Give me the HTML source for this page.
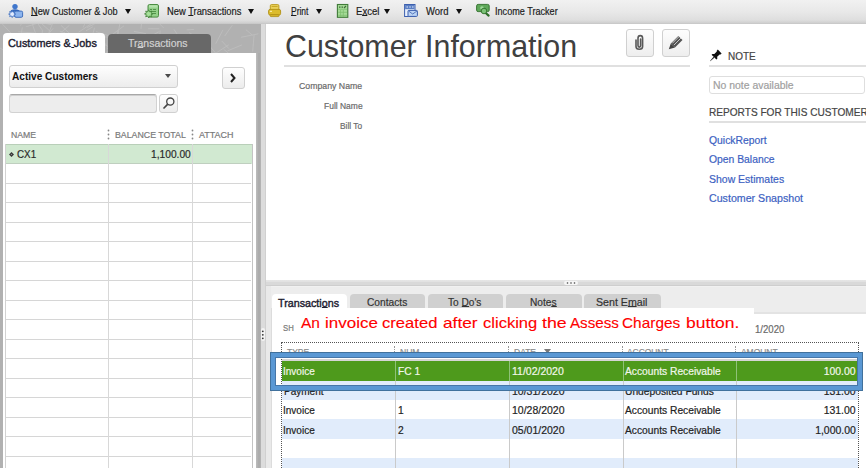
<!DOCTYPE html>
<html><head><meta charset="utf-8">
<style>
*{margin:0;padding:0;box-sizing:border-box}
html,body{width:866px;height:468px;overflow:hidden;background:#fff}
body{position:relative;font-family:"Liberation Sans",sans-serif;font-size:11px;color:#222}
.a{position:absolute}
.t{position:absolute;white-space:nowrap;line-height:1}
u{text-decoration:none;background:linear-gradient(currentColor,currentColor) no-repeat 0 calc(100% - 1px)/100% 1px}
.arr{position:absolute;width:0;height:0;border-left:3px solid transparent;border-right:3px solid transparent;border-top:5px solid #111}
.btn{position:absolute;border:1px solid #d0d0d0;border-radius:3px;background:linear-gradient(#fefefe,#ececec)}
.ll{position:absolute;left:6px;width:245px;height:1px;background:#d6d6d6}
.tabg{position:absolute;top:294px;height:20px;background:#d0d0d0;border-radius:4px 4px 0 0}
</style></head><body>

<!-- toolbar -->
<div class="a" style="left:0;top:0;width:866px;height:24px;background:linear-gradient(#f1f1f1 0px,#e8e8e8 12px,#dedede 20px,#cfcfcf 23px,#c4c4c4 24px)"></div>
<svg class="a" style="left:0;top:0" width="30" height="22" viewBox="0 0 30 22">
  <circle cx="15" cy="6.6" r="2.7" fill="#3f76cc"/>
  <path d="M10 12.5Q10.3 9.2 15 9.2Q19.7 9.2 20 12Z" fill="#3468bd"/>
  <rect x="14.6" y="11.1" width="8" height="6.2" rx="1.3" fill="#8db5ee" stroke="#3566b8" stroke-width="0.9"/>
  <path d="M12.2 10.6L13 12.3L14.8 11.6L14.2 13.4L15.8 14.1L14.2 14.8L14.8 16.6L13 15.9L12.2 17.6L11.4 15.9L9.6 16.6L10.2 14.8L8.6 14.1L10.2 13.4L9.6 11.6L11.4 12.3Z" fill="#e2ecff" stroke="#3d6fc0" stroke-width="0.8"/>
</svg>
<div class="arr" style="left:124.5px;top:8.5px;border-left-width:3.2px;border-right-width:3.2px"></div>
<svg class="a" style="left:140px;top:0" width="24" height="22" viewBox="0 0 24 22">
  <rect x="8" y="4.5" width="10.5" height="12.6" rx="1.5" fill="#93d089" stroke="#4b8c42" stroke-width="1"/>
  <rect x="9" y="5.2" width="8.5" height="2.4" fill="#b4e2ab"/>
  <path d="M10 9.5H12M13 9.5H16M10 11.5H16M11 13.5H16" stroke="#4b8c42" stroke-width="0.9"/>
  <path d="M8.7 9.8L9.6 11.8L11.7 11L11 13.1L12.9 13.9L11 14.7L11.7 16.8L9.6 16L8.7 18L7.8 16L5.7 16.8L6.4 14.7L4.5 13.9L6.4 13.1L5.7 11L7.8 11.8Z" fill="#a6e09a" stroke="#3f7f36" stroke-width="0.8"/>
</svg>
<div class="arr" style="left:248px;top:8.5px"></div>
<svg class="a" style="left:264px;top:0" width="24" height="22" viewBox="0 0 24 22">
  <rect x="6.3" y="4.6" width="8.6" height="6" rx="1.2" fill="#e9d15a" stroke="#b8961a" stroke-width="0.9"/>
  <rect x="7.6" y="6" width="6" height="1" fill="#c9a826"/>
  <rect x="4.6" y="9.4" width="12" height="5.6" rx="1.5" fill="#dcbc2c" stroke="#b08e12" stroke-width="0.9"/>
  <rect x="5.8" y="10.8" width="2.2" height="1" fill="#fff6c0"/>
  <rect x="6.2" y="14.6" width="8.8" height="2" rx="0.8" fill="#d6b52a" stroke="#b08e12" stroke-width="0.8"/>
</svg>
<div class="arr" style="left:316px;top:8.5px"></div>
<svg class="a" style="left:332px;top:0" width="24" height="22" viewBox="0 0 24 22">
  <rect x="5.4" y="4.5" width="10.4" height="12.8" fill="#a6dc98" stroke="#3f7a38" stroke-width="1.1"/>
  <path d="M7 7.2H8.5M9.5 7.2H11M12 8L14 6" stroke="#3f6a38" stroke-width="1.2"/>
  <path d="M6.2 9.3H15M6.2 12.3H15M6.2 15.3H15M8.6 10V17M11.3 10V17" stroke="#7fbf70" stroke-width="0.8"/>
</svg>
<div class="arr" style="left:383.5px;top:8.5px"></div>
<svg class="a" style="left:400px;top:0" width="24" height="22" viewBox="0 0 24 22">
  <rect x="4.6" y="4.5" width="10.4" height="12" fill="#e8f0fc" stroke="#3c5fae" stroke-width="1"/>
  <rect x="5.1" y="5" width="9.4" height="4.2" fill="#5b7fc4"/>
  <path d="M6.5 7H8M9.3 7H10.8M12 7H13.5" stroke="#e6eefc" stroke-width="1.2"/>
  <rect x="8" y="10.4" width="9.4" height="6" rx="0.8" fill="#bcd4f4" stroke="#3c5fae" stroke-width="1"/>
  <path d="M8.5 11L12.7 14L17 11" stroke="#3c5fae" stroke-width="0.8" fill="none"/>
</svg>
<div class="arr" style="left:456px;top:8.5px"></div>
<svg class="a" style="left:472px;top:0" width="24" height="22" viewBox="0 0 24 22">
  <rect x="4.6" y="4.4" width="12.6" height="7.2" rx="1.5" fill="#5fa85a" stroke="#2f6e2a" stroke-width="0.9"/>
  <circle cx="10" cy="8" r="1.8" fill="#9fd89a"/>
  <path d="M14 13.2L16.6 15.6" stroke="#2f6e2a" stroke-width="2.2" stroke-linecap="round"/>
  <circle cx="12" cy="11" r="2.8" fill="#7cc277" stroke="#2f6e2a" stroke-width="0.9"/>
</svg>

<!-- left panel bg -->
<div class="a" style="left:0;top:24px;width:261px;height:444px;background:#b1b1b1"></div>
<svg class="a" style="left:0;top:24px" width="261" height="30" viewBox="0 0 261 30"><path d="M86.1 -2.5L83.0 3.6M133.9 7.4L145.8 9.6M6.3 10.3L13.2 11.8M106.8 23.9L114.8 27.2M165.1 24.8L162.5 35.3M259.1 -5.3L250.5 -1.2M33.2 -7.2L42.1 5.9M49.4 11.8L45.0 21.3M138.8 -3.5L147.1 -1.9M174.0 5.4L181.2 16.3M124.0 1.8L112.5 10.4M64.4 8.0L63.1 24.5M194.1 5.4L186.7 5.9M103.9 20.3L114.4 25.7M15.0 15.4L5.5 24.1M232.3 1.2L224.7 12.0M158.9 7.7L143.8 16.1M116.7 18.2L130.8 20.9M172.9 29.2L164.9 34.2M94.9 19.3L106.4 20.1M36.4 -2.1L51.3 0.7M31.0 -3.6L36.5 11.9M22.3 3.4L19.7 19.8M210.3 22.8L217.4 31.2M97.5 27.2L89.8 28.2M41.6 -0.4L50.4 7.5M148.2 4.7L159.3 4.8M103.4 14.9L89.3 17.0M136.3 15.0L132.8 20.7M242.0 20.9L227.6 26.8M96.0 7.6L108.9 11.9M13.1 -4.9L19.4 -0.1M84.8 -3.1L92.7 -3.1M18.3 7.8L34.7 9.1M156.7 -3.1L163.8 4.1M103.0 -4.5L87.1 3.6M118.1 11.9L125.1 13.9M92.8 2.8L86.0 6.8M6.4 26.3L5.7 34.1M142.6 -12.8L141.0 4.8M221.8 17.0L228.9 24.6M44.4 15.9L42.8 31.2M93.4 -1.7L78.6 8.2M228.8 20.8L216.3 28.8M57.8 11.3L60.6 17.0M2.4 0.1L12.2 10.5M258.4 9.8L240.9 13.3M245.9 5.7L252.6 11.3M54.5 -5.2L48.1 10.3M223.0 5.8L215.7 19.7M29.5 17.3L14.7 21.6M189.2 8.6L202.3 16.8M92.1 24.2L81.4 25.1M107.4 27.0L102.2 33.1M40.6 -1.7L25.7 2.9M45.1 25.2L31.2 26.0M88.6 14.1L94.3 16.5M254.1 10.5L252.7 27.6M116.9 25.0L109.6 29.5M61.0 1.4L70.5 10.3M59.9 7.1L75.4 13.9M94.5 3.8L90.2 20.1M109.8 22.8L109.8 35.1M135.9 -8.3L137.4 -0.3M-4.0 21.6L6.0 27.6M186.1 10.4L192.5 20.8M139.0 21.9L151.0 26.1M69.4 1.3L60.3 9.2M152.1 21.6L141.2 24.7M160.1 6.6L159.6 20.9M117.5 6.1L118.7 23.4M187.0 26.6L178.0 28.3M149.4 28.1L142.7 31.7M27.4 10.4L36.1 12.4M25.6 14.5L12.6 25.0M42.2 18.1L38.4 24.9M223.7 25.3L237.1 36.3M111.9 12.8L96.0 13.3M42.4 5.9L41.9 16.0M53.1 4.4L49.1 9.2M139.6 11.0L149.6 11.6M154.1 12.2L171.6 15.7M201.4 29.5L210.1 32.4M7.8 21.0L12.8 26.7M114.0 26.3L106.4 31.2M40.6 22.0L37.4 36.0M26.4 -7.5L20.3 1.7M22.1 22.6L15.7 36.8M13.9 25.0L29.9 28.4M119.9 -0.9L117.0 16.0" stroke="#bdbdbd" stroke-width="0.9" fill="none"/></svg>
<div class="a" style="left:256px;top:53px;width:5px;height:415px;background:linear-gradient(90deg,#bdbdbd,#a9a9a9 60%,#b5b5b5)"></div>
<div class="a" style="left:261px;top:24px;width:5px;height:444px;background:#dcdcdc"></div>
<div class="a" style="left:265px;top:24px;width:1px;height:444px;background:#d0d0d0"></div>
<!-- tabs -->
<div class="a" style="left:3px;top:33px;width:102px;height:21px;background:#fff;border-radius:4px 4px 0 0"></div>
<div class="a" style="left:108px;top:34px;width:103px;height:19px;background:#686868;border-radius:4px 4px 0 0"></div>
<div class="a" style="left:3px;top:53px;width:253px;height:415px;background:#fff"></div>

<div class="btn" style="left:9px;top:65px;width:169px;height:23px"></div>
<div class="arr" style="left:164.5px;top:74px;border-left-width:3.5px;border-right-width:3.5px;border-top-width:4px;border-top-color:#4a4a4a"></div>
<div class="btn" style="left:222px;top:67px;width:23px;height:22px"></div>
<svg class="a" style="left:229px;top:72px" width="8" height="12" viewBox="0 0 8 12"><path d="M2 2L5.5 6L2 10" stroke="#222" stroke-width="2" fill="none"/></svg>

<div class="a" style="left:9px;top:94px;width:148px;height:19px;border:1px solid #d2d2d2;border-top-color:#a8a8a8;border-radius:3px;background:#ededed;box-shadow:inset 0 1px 0 #cfcfcf"></div>
<div class="btn" style="left:159px;top:94px;width:19px;height:19px"></div>
<svg class="a" style="left:161px;top:96px" width="15" height="15" viewBox="0 0 15 15"><circle cx="9.3" cy="5.6" r="3.6" stroke="#444" stroke-width="1.3" fill="none"/><path d="M6.8 8.2L2.5 12.5" stroke="#444" stroke-width="1.7"/></svg>

<svg class="a" style="left:107px;top:129px" width="3" height="11"><circle cx="1.5" cy="1.5" r="0.9" fill="#888"/><circle cx="1.5" cy="5.5" r="0.9" fill="#888"/><circle cx="1.5" cy="9.5" r="0.9" fill="#888"/></svg>
<svg class="a" style="left:191px;top:129px" width="3" height="11"><circle cx="1.5" cy="1.5" r="0.9" fill="#888"/><circle cx="1.5" cy="5.5" r="0.9" fill="#888"/><circle cx="1.5" cy="9.5" r="0.9" fill="#888"/></svg>

<!-- left grid -->
<div class="a" style="left:5px;top:144px;width:247px;height:20px;background:#d1e9d1;border-top:1px solid #b9cfb9"></div>
<div class="ll" style="top:163px;background:#bfcfbf"></div>
<div class="ll" style="top:183px"></div><div class="ll" style="top:202px"></div><div class="ll" style="top:222px"></div>
<div class="ll" style="top:241px"></div><div class="ll" style="top:261px"></div><div class="ll" style="top:280px"></div>
<div class="ll" style="top:300px"></div><div class="ll" style="top:319px"></div><div class="ll" style="top:339px"></div>
<div class="ll" style="top:358px"></div><div class="ll" style="top:378px"></div><div class="ll" style="top:397px"></div>
<div class="ll" style="top:417px"></div><div class="ll" style="top:436px"></div><div class="ll" style="top:456px"></div>
<div class="a" style="left:5px;top:144px;width:1px;height:324px;background:#d2d2d2"></div>
<div class="a" style="left:108px;top:144px;width:1px;height:324px;background:#d8d8d8"></div>
<div class="a" style="left:192px;top:144px;width:1px;height:324px;background:#d8d8d8"></div>
<div class="a" style="left:252px;top:144px;width:1px;height:324px;background:#c4c4c4"></div>
<svg class="a" style="left:8px;top:151px" width="7" height="7" viewBox="0 0 7 7"><path d="M3.5 1L6 3.5L3.5 6L1 3.5Z" fill="#3a3a3a"/><circle cx="3.5" cy="3.5" r="0.6" fill="#999"/></svg>

<!-- right top -->
<div class="a" style="left:284px;top:65px;width:406px;height:2px;background:#e0e0e0"></div>
<div class="btn" style="left:626px;top:29px;width:28px;height:28px;background:linear-gradient(#fdfdfd,#eeeeee)"></div>
<div class="btn" style="left:662px;top:29px;width:28px;height:28px;background:linear-gradient(#fdfdfd,#eeeeee)"></div>
<svg class="a" style="left:624px;top:27px" width="68" height="32" viewBox="0 0 68 32">
  <path d="M12 13V19.5Q12 22.3 15.3 22.3Q18.6 22.3 18.6 19.5V11.2Q18.6 8.6 16.3 8.6Q14 8.6 14 11.2V18.6Q14 20.1 15.3 20.1Q16.6 20.1 16.6 18.6V12" stroke="#585858" stroke-width="1.6" fill="none" stroke-linecap="round"/>
  <path d="M54.3 8.9L58.5 13.1L51 20.6L46.8 16.4Z" fill="#555"/>
  <path d="M46.8 16.4L51 20.6L44.8 22.2Z" fill="#444"/>
  <path d="M48.3 16.3L55.2 9.4M50 18L56.9 11.1" stroke="#e6e6e6" stroke-width="0.8"/>
</svg>
<svg class="a" style="left:704px;top:46px" width="24" height="20" viewBox="0 0 24 20">
  <g transform="translate(12.6 8.6) rotate(45)">
    <path d="M-2.7 -4.4H2.7V-2.9L2 -2.3V1.2L3.4 2.4V3.7H-3.4V2.4L-2 1.2V-2.3L-2.7 -2.9Z" fill="#111"/>
    <path d="M-0.6 3.8H0.6L0.15 9.2H-0.15Z" fill="#222"/>
  </g>
</svg>
<div class="a" style="left:709px;top:65px;width:157px;height:2px;background:#e0e0e0"></div>
<div class="a" style="left:709px;top:76px;width:156px;height:18px;border:1px solid #dedede;border-radius:3px"></div>
<div class="a" style="left:709px;top:121px;width:157px;height:2px;background:#e0e0e0"></div>

<!-- horizontal splitter -->
<div class="a" style="left:266px;top:280px;width:600px;height:6px;background:linear-gradient(#e6e6e6 0px,#e2e2e2 1.5px,#d9d9d9 2px,#d9d9d9 5px,#cecece 5.5px)"></div>
<div class="a" style="left:564px;top:281px;width:14px;height:4px;background:#f6f6f6;border-radius:2px"></div>
<svg class="a" style="left:564px;top:281px" width="14" height="4"><circle cx="3.5" cy="2" r="0.8" fill="#444"/><circle cx="7" cy="2" r="0.8" fill="#444"/><circle cx="10.5" cy="2" r="0.8" fill="#444"/></svg>
<div class="a" style="left:266px;top:286px;width:600px;height:182px;background:#ededed"></div>
<div class="a" style="left:266px;top:286px;width:600px;height:1px;background:#f1f1f1"></div>
<div class="a" style="left:266px;top:286px;width:5px;height:182px;background:#e9e9e9"></div>
<div class="a" style="left:271px;top:308px;width:1px;height:160px;background:#dcdcdc"></div>

<!-- vertical splitter handle -->
<div class="a" style="left:261px;top:328px;width:4px;height:13px;background:#f4f4f4;border-radius:2px"></div>
<svg class="a" style="left:260px;top:328px" width="6" height="13"><circle cx="2.8" cy="3.3" r="0.9" fill="#333"/><circle cx="2.8" cy="6.8" r="0.9" fill="#333"/><circle cx="2.8" cy="10.3" r="0.9" fill="#333"/></svg>

<!-- bottom tabs -->
<div class="a" style="left:272px;top:294px;width:75px;height:22px;background:#fff;border-radius:4px 4px 0 0"></div>
<div class="tabg" style="left:350px;width:75px"></div>
<div class="tabg" style="left:428px;width:75px"></div>
<div class="tabg" style="left:506px;width:76px"></div>
<div class="tabg" style="left:584px;width:77px"></div>
<div class="a" style="left:347px;top:312px;width:519px;height:2px;background:#e3e3e3"></div>
<div class="a" style="left:272px;top:314px;width:594px;height:154px;background:#fff"></div>

<!-- table -->
<div class="a" style="left:281px;top:342px;width:578px;height:130px;border:1px dotted #555"></div>
<div class="a" style="left:394px;top:346px;width:1px;height:10px;border-left:1px dotted #999"></div>
<div class="a" style="left:508px;top:346px;width:1px;height:10px;border-left:1px dotted #999"></div>
<div class="a" style="left:622px;top:346px;width:1px;height:10px;border-left:1px dotted #999"></div>
<div class="a" style="left:735px;top:346px;width:1px;height:10px;border-left:1px dotted #999"></div>
<svg class="a" style="left:544px;top:349px" width="7" height="5"><path d="M0 0H7L3.5 4.5Z" fill="#777"/></svg>

<div class="a" style="left:282px;top:380px;width:576px;height:20px;background:#e1ecfb"></div>
<div class="a" style="left:282px;top:419px;width:576px;height:20px;background:#e1ecfb"></div>
<div class="a" style="left:282px;top:458px;width:576px;height:10px;background:#e1ecfb"></div>
<div class="a" style="left:395px;top:361px;width:1px;height:107px;background:#cacaca"></div>
<div class="a" style="left:509px;top:361px;width:1px;height:107px;background:#cacaca"></div>
<div class="a" style="left:623px;top:361px;width:1px;height:107px;background:#cacaca"></div>
<div class="a" style="left:736px;top:361px;width:1px;height:107px;background:#cacaca"></div>
<div class="a" style="left:282px;top:359px;width:576px;height:2px;background:#d5d5d5"></div>
<div class="a" style="left:282px;top:361px;width:576px;height:20px;background:#4e9a1c"></div>
<div class="a" style="left:395px;top:361px;width:1px;height:20px;background:#8fc278"></div>
<div class="a" style="left:509px;top:361px;width:1px;height:20px;background:#8fc278"></div>
<div class="a" style="left:623px;top:361px;width:1px;height:20px;background:#8fc278"></div>
<div class="a" style="left:736px;top:361px;width:1px;height:20px;background:#8fc278"></div>

<div class="t" style="top:5.56px;font-size:11px;color:#1c1c1c;transform:scaleX(0.8333);-webkit-text-stroke:0.2px #1c1c1c;left:31.10px;transform-origin:left top;"><u>N</u>ew Customer &amp; Job</div>
<div class="t" style="top:5.56px;font-size:11px;color:#1c1c1c;transform:scaleX(0.8511);-webkit-text-stroke:0.2px #1c1c1c;left:166.60px;transform-origin:left top;">New <u>T</u>ransactions</div>
<div class="t" style="top:5.56px;font-size:11px;color:#1c1c1c;transform:scaleX(0.7712);-webkit-text-stroke:0.2px #1c1c1c;left:290.60px;transform-origin:left top;"><u>P</u>rint</div>
<div class="t" style="top:5.56px;font-size:11px;color:#1c1c1c;transform:scaleX(0.8694);-webkit-text-stroke:0.2px #1c1c1c;left:356.30px;transform-origin:left top;">E<u>x</u>cel</div>
<div class="t" style="top:5.56px;font-size:11px;color:#1c1c1c;transform:scaleX(0.8589);-webkit-text-stroke:0.2px #1c1c1c;left:426.00px;transform-origin:left top;">Word</div>
<div class="t" style="top:5.56px;font-size:11px;color:#1c1c1c;transform:scaleX(0.8269);-webkit-text-stroke:0.2px #1c1c1c;left:495.37px;transform-origin:left top;">Income Tracker</div>
<div class="t" style="top:38.46px;font-size:11px;color:#1d2030;transform:scaleX(0.9882);-webkit-text-stroke:0.4px #1d2030;left:8.10px;transform-origin:left top;">Customers &amp;<u> </u>Jobs</div>
<div class="t" style="top:38.26px;font-size:11px;color:#d2d2d2;transform:scaleX(0.9514);-webkit-text-stroke:0.2px #d2d2d2;left:128.20px;transform-origin:left top;">Tr<u>a</u>nsactions</div>
<div class="t" style="top:71.18px;font-size:11.5px;color:#111;transform:scaleX(0.8779);font-weight:bold;left:11.50px;transform-origin:left top;">Active Customers</div>
<div class="t" style="top:130.87px;font-size:9px;color:#7a7a7a;transform:scaleX(0.9616);-webkit-text-stroke:0.2px #7a7a7a;left:11.10px;transform-origin:left top;">NAME</div>
<div class="t" style="top:130.87px;font-size:9px;color:#7a7a7a;transform:scaleX(0.9768);-webkit-text-stroke:0.2px #7a7a7a;left:115.00px;transform-origin:left top;">BALANCE TOTAL</div>
<div class="t" style="top:130.87px;font-size:9px;color:#7a7a7a;transform:scaleX(0.9952);-webkit-text-stroke:0.2px #7a7a7a;left:198.80px;transform-origin:left top;">ATTACH</div>
<div class="t" style="top:148.66px;font-size:11px;color:#2a2a2a;transform:scaleX(0.8928);-webkit-text-stroke:0.2px #2a2a2a;left:17.10px;transform-origin:left top;">CX1</div>
<div class="t" style="top:148.66px;font-size:11px;color:#2a2a2a;transform:scaleX(0.9297);-webkit-text-stroke:0.2px #2a2a2a;left:151.00px;transform-origin:left top;">1,100.00</div>
<div class="t" style="top:30.86px;font-size:31.8px;color:#404040;transform:scaleX(0.9553);left:284.54px;transform-origin:left top;">Customer Information</div>
<div class="t" style="top:81.11px;font-size:9.4px;color:#6a6a6a;transform:scaleX(0.9330);-webkit-text-stroke:0.2px #6a6a6a;left:299.00px;transform-origin:left top;">Company Name</div>
<div class="t" style="top:100.91px;font-size:9.4px;color:#6a6a6a;transform:scaleX(0.9034);-webkit-text-stroke:0.2px #6a6a6a;left:323.60px;transform-origin:left top;">Full Name</div>
<div class="t" style="top:120.51px;font-size:9.4px;color:#6a6a6a;transform:scaleX(0.8874);-webkit-text-stroke:0.2px #6a6a6a;left:340.00px;transform-origin:left top;">Bill To</div>
<div class="t" style="top:50.96px;font-size:11px;color:#454545;transform:scaleX(0.9067);-webkit-text-stroke:0.2px #454545;left:728.20px;transform-origin:left top;">NOTE</div>
<div class="t" style="top:79.76px;font-size:11px;color:#a0a0a0;transform:scaleX(0.9483);-webkit-text-stroke:0.2px #a0a0a0;left:712.50px;transform-origin:left top;">No note available</div>
<div class="t" style="top:106.96px;font-size:11px;color:#454545;transform:scaleX(0.9179);-webkit-text-stroke:0.2px #454545;left:709.40px;transform-origin:left top;">REPORTS FOR THIS CUSTOMER</div>
<div class="t" style="top:134.56px;font-size:11px;color:#3c5fc2;transform:scaleX(0.9431);-webkit-text-stroke:0.2px #3c5fc2;left:709.40px;transform-origin:left top;">QuickReport</div>
<div class="t" style="top:153.86px;font-size:11px;color:#3c5fc2;transform:scaleX(0.9411);-webkit-text-stroke:0.2px #3c5fc2;left:709.40px;transform-origin:left top;">Open Balance</div>
<div class="t" style="top:173.56px;font-size:11px;color:#3c5fc2;transform:scaleX(0.9526);-webkit-text-stroke:0.2px #3c5fc2;left:709.40px;transform-origin:left top;">Show Estimates</div>
<div class="t" style="top:192.86px;font-size:11px;color:#3c5fc2;transform:scaleX(0.9675);-webkit-text-stroke:0.2px #3c5fc2;left:709.40px;transform-origin:left top;">Customer Snapshot</div>
<div class="t" style="top:298.26px;font-size:11px;color:#1d2030;transform:scaleX(0.9752);-webkit-text-stroke:0.4px #1d2030;left:278.10px;transform-origin:left top;">Transacti<u>o</u>ns</div>
<div class="t" style="top:297.26px;font-size:11px;color:#333;transform:scaleX(0.9269);-webkit-text-stroke:0.2px #333;left:366.70px;transform-origin:left top;">Contacts</div>
<div class="t" style="top:297.26px;font-size:11px;color:#333;transform:scaleX(0.9176);-webkit-text-stroke:0.2px #333;left:448.40px;transform-origin:left top;">To <u>D</u>o&#x27;s</div>
<div class="t" style="top:297.26px;font-size:11px;color:#333;transform:scaleX(0.9235);-webkit-text-stroke:0.2px #333;left:530.10px;transform-origin:left top;">Note<u>s</u></div>
<div class="t" style="top:297.26px;font-size:11px;color:#333;transform:scaleX(0.9669);-webkit-text-stroke:0.2px #333;left:596.00px;transform-origin:left top;">Sent E<u>m</u>ail</div>
<div class="t" style="top:324.25px;font-size:8.5px;color:#7a7a7a;transform:scaleX(0.9084);-webkit-text-stroke:0.2px #7a7a7a;left:282.60px;transform-origin:left top;">SH</div>
<div class="t" style="top:324.06px;font-size:11px;color:#6a6a6a;transform:scaleX(0.8739);-webkit-text-stroke:0.2px #6a6a6a;left:754.90px;transform-origin:left top;">1/2020</div>
<div class="t" style="top:347.57px;font-size:9px;color:#8a8a8a;transform:scaleX(0.9360);-webkit-text-stroke:0.2px #8a8a8a;left:287.30px;transform-origin:left top;">TYPE</div>
<div class="t" style="top:347.57px;font-size:9px;color:#8a8a8a;transform:scaleX(0.9500);-webkit-text-stroke:0.2px #8a8a8a;left:400.00px;transform-origin:left top;">NUM</div>
<div class="t" style="top:347.57px;font-size:9px;color:#8a8a8a;transform:scaleX(0.9429);-webkit-text-stroke:0.2px #8a8a8a;left:514.00px;transform-origin:left top;">DATE</div>
<div class="t" style="top:347.57px;font-size:9px;color:#8a8a8a;transform:scaleX(0.9333);-webkit-text-stroke:0.2px #8a8a8a;left:627.00px;transform-origin:left top;">ACCOUNT</div>
<div class="t" style="top:347.57px;font-size:9px;color:#8a8a8a;transform:scaleX(0.9367);-webkit-text-stroke:0.2px #8a8a8a;left:741.00px;transform-origin:left top;">AMOUNT</div>
<div class="t" style="top:365.76px;font-size:11px;color:#f2f7ea;transform:scaleX(0.9112);-webkit-text-stroke:0.2px #f2f7ea;left:283.39px;transform-origin:left top;">Invoice</div>
<div class="t" style="top:365.76px;font-size:11px;color:#f2f7ea;transform:scaleX(0.9300);-webkit-text-stroke:0.2px #f2f7ea;left:398.30px;transform-origin:left top;">FC 1</div>
<div class="t" style="top:365.76px;font-size:11px;color:#f2f7ea;transform:scaleX(0.9539);-webkit-text-stroke:0.2px #f2f7ea;left:511.80px;transform-origin:left top;">11/02/2020</div>
<div class="t" style="top:365.76px;font-size:11px;color:#f2f7ea;transform:scaleX(0.9318);-webkit-text-stroke:0.2px #f2f7ea;left:625.30px;transform-origin:left top;">Accounts Receivable</div>
<div class="t" style="top:365.76px;font-size:11px;color:#f2f7ea;transform:scaleX(0.9500);-webkit-text-stroke:0.2px #f2f7ea;right:10.09px;transform-origin:right top;">100.00</div>
<div class="t" style="top:386.26px;font-size:11px;color:#222;transform:scaleX(0.9112);-webkit-text-stroke:0.2px #222;left:284.30px;transform-origin:left top;">Payment</div>
<div class="t" style="top:386.26px;font-size:11px;color:#222;transform:scaleX(0.9539);-webkit-text-stroke:0.2px #222;left:511.80px;transform-origin:left top;">10/31/2020</div>
<div class="t" style="top:386.26px;font-size:11px;color:#222;transform:scaleX(0.9318);-webkit-text-stroke:0.2px #222;left:625.30px;transform-origin:left top;">Undeposited Funds</div>
<div class="t" style="top:386.26px;font-size:11px;color:#222;transform:scaleX(0.9500);-webkit-text-stroke:0.2px #222;right:10.09px;transform-origin:right top;">131.00</div>
<div class="t" style="top:405.16px;font-size:11px;color:#222;transform:scaleX(0.9112);-webkit-text-stroke:0.2px #222;left:283.39px;transform-origin:left top;">Invoice</div>
<div class="t" style="top:405.16px;font-size:11px;color:#222;transform:scaleX(0.9300);-webkit-text-stroke:0.2px #222;left:398.30px;transform-origin:left top;">1</div>
<div class="t" style="top:405.16px;font-size:11px;color:#222;transform:scaleX(0.9539);-webkit-text-stroke:0.2px #222;left:511.80px;transform-origin:left top;">10/28/2020</div>
<div class="t" style="top:405.16px;font-size:11px;color:#222;transform:scaleX(0.9318);-webkit-text-stroke:0.2px #222;left:625.30px;transform-origin:left top;">Accounts Receivable</div>
<div class="t" style="top:405.16px;font-size:11px;color:#222;transform:scaleX(0.9500);-webkit-text-stroke:0.2px #222;right:10.09px;transform-origin:right top;">131.00</div>
<div class="t" style="top:424.76px;font-size:11px;color:#222;transform:scaleX(0.9112);-webkit-text-stroke:0.2px #222;left:283.39px;transform-origin:left top;">Invoice</div>
<div class="t" style="top:424.76px;font-size:11px;color:#222;transform:scaleX(0.9300);-webkit-text-stroke:0.2px #222;left:398.30px;transform-origin:left top;">2</div>
<div class="t" style="top:424.76px;font-size:11px;color:#222;transform:scaleX(0.9539);-webkit-text-stroke:0.2px #222;left:511.80px;transform-origin:left top;">05/01/2020</div>
<div class="t" style="top:424.76px;font-size:11px;color:#222;transform:scaleX(0.9318);-webkit-text-stroke:0.2px #222;left:625.30px;transform-origin:left top;">Accounts Receivable</div>
<div class="t" style="top:424.76px;font-size:11px;color:#222;transform:scaleX(0.9500);-webkit-text-stroke:0.2px #222;right:10.09px;transform-origin:right top;">1,000.00</div>

<!-- annotation -->
<div class="a" style="left:294px;top:308px;width:460px;height:32px;background:#fff"></div>
<div class="t" style="top:315.22px;font-size:15px;color:#fe0000;transform:scaleX(1.0331);-webkit-text-stroke:0.12px #fe0000;left:301.30px;transform-origin:left top;">An</div>
<div class="t" style="top:315.22px;font-size:15px;color:#fe0000;transform:scaleX(1.1312);-webkit-text-stroke:0.12px #fe0000;left:324.57px;transform-origin:left top;">invoice</div>
<div class="t" style="top:315.22px;font-size:15px;color:#fe0000;transform:scaleX(1.1069);-webkit-text-stroke:0.12px #fe0000;left:382.20px;transform-origin:left top;">created</div>
<div class="t" style="top:315.22px;font-size:15px;color:#fe0000;transform:scaleX(1.1526);-webkit-text-stroke:0.12px #fe0000;left:442.70px;transform-origin:left top;">after</div>
<div class="t" style="top:315.22px;font-size:15px;color:#fe0000;transform:scaleX(1.1036);-webkit-text-stroke:0.12px #fe0000;left:482.90px;transform-origin:left top;">clicking</div>
<div class="t" style="top:315.22px;font-size:15px;color:#fe0000;transform:scaleX(1.1848);-webkit-text-stroke:0.12px #fe0000;left:541.50px;transform-origin:left top;">the</div>
<div class="t" style="top:315.22px;font-size:15px;color:#fe0000;transform:scaleX(1.0116);-webkit-text-stroke:0.12px #fe0000;left:569.50px;transform-origin:left top;">Assess</div>
<div class="t" style="top:315.22px;font-size:15px;color:#fe0000;transform:scaleX(1.0267);-webkit-text-stroke:0.12px #fe0000;left:622.10px;transform-origin:left top;">Charges</div>
<div class="t" style="top:315.22px;font-size:15px;color:#fe0000;transform:scaleX(1.1632);-webkit-text-stroke:0.12px #fe0000;left:685.60px;transform-origin:left top;">button.</div>
<div class="a" style="left:270px;top:352px;width:593px;height:39px;border:1px solid #41719c"></div>
<div class="a" style="left:271px;top:353px;width:591px;height:37px;border:4.5px solid #5a98d4"></div>
<div class="a" style="left:275px;top:357px;width:583px;height:29px;border:1px solid #4676a8"></div>
</body></html>
